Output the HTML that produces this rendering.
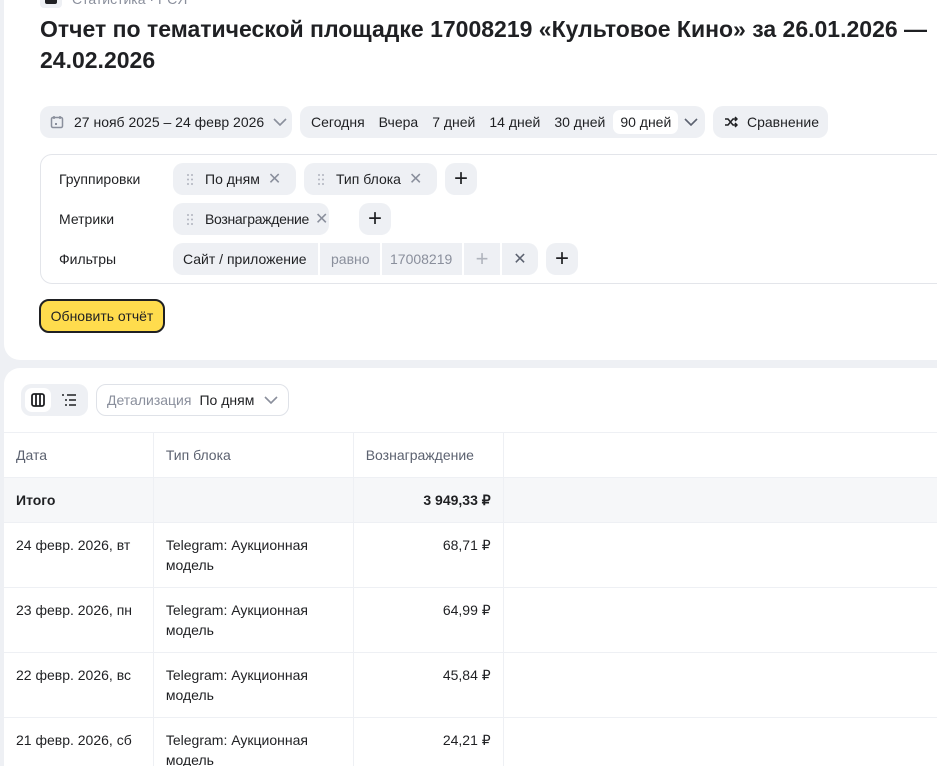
<!DOCTYPE html>
<html><head><meta charset="utf-8"><style>
*{box-sizing:border-box;margin:0;padding:0}
html,body{width:937px;height:766px;overflow:hidden}
body{background:#eef0f4;font-family:"Liberation Sans",sans-serif;color:#1f2023;position:relative;font-size:14px}
.p1{position:absolute;left:4px;top:0;width:960px;height:360px;background:#fff;border-radius:0 0 0 16px}
.p2{position:absolute;left:4px;top:368px;width:960px;height:420px;background:#fff;border-radius:16px 0 0 0;overflow:hidden}
.abs{position:absolute}
.pill{position:absolute;height:32px;background:#eef0f4;border-radius:10px;display:flex;align-items:center;font-size:14px;white-space:nowrap}
.g{color:#8a8f9c}
.x{color:#8a8f9c;font-size:16px}
table{border-collapse:collapse;position:absolute;left:-1px;top:64px;font-size:14px}
td{border:1px solid #eef0f4;vertical-align:top;padding:12px 12px;line-height:20px}
tr.h td{color:#5c6270;height:45px;vertical-align:middle}
tr.t td{background:#f6f7f9;font-weight:bold;height:45px;vertical-align:middle}
tr.r td{height:65px}
.num{text-align:right}
</style></head><body>
<div class="p1">
 <div class="abs" style="left:36px;top:-10px;width:22px;height:18px;background:#eef0f4;border-radius:4px"><div style="position:absolute;left:5px;top:4px;width:12px;height:10px;background:#1f2023;border-radius:2px"></div></div>
 <div class="abs g" style="left:68px;top:-9px;font-size:14px">Статистика · РСЯ</div>
 <div class="abs" style="left:36px;top:14px;font-size:23px;font-weight:bold;line-height:31px;width:900px">Отчет по тематической площадке 17008219 «Культовое Кино» за 26.01.2026 —<br>24.02.2026</div>
 <div class="pill" style="left:36px;top:106px;width:252px;padding-left:10px">
  <svg width="14" height="14" viewBox="0 0 14 14" fill="none" stroke="#8a8f9c" stroke-width="1.5"><rect x="1.5" y="2.5" width="11" height="10" rx="1.5"/><path d="M4 1v3M10 1v3"/><rect x="5" y="8" width="2" height="2" fill="#8a8f9c" stroke="none"/></svg>
  <span style="margin-left:10px">27 нояб 2025 – 24 февр 2026</span>
  <svg style="margin-left:9px" width="14" height="8" viewBox="0 0 14 8" fill="none" stroke="#8a8f9c" stroke-width="1.6"><path d="M1 1l6 6 6-6"/></svg>
 </div>
 <div class="pill" style="left:296px;top:106px;width:405px">
  <span style="margin-left:11px">Сегодня</span><span style="margin-left:14px">Вчера</span><span style="margin-left:14px">7 дней</span><span style="margin-left:14px">14 дней</span><span style="margin-left:14px">30 дней</span>
  <span style="margin-left:8px;background:#fff;border-radius:7px;padding:4px 7px">90 дней</span>
  <svg style="margin-left:6px" width="14" height="8" viewBox="0 0 14 8" fill="none" stroke="#5c6270" stroke-width="1.6"><path d="M1 1l6 6 6-6"/></svg>
 </div>
 <div class="pill" style="left:709px;top:106px;width:115px;padding-left:12px">
  <svg width="13" height="12" viewBox="0 0 13 12" fill="none" stroke="#1f2023" stroke-width="1.5"><path d="M0 3h3l5 6h4M0 9h3l5-6h4M10 1l2 2-2 2M10 7l2 2-2 2"/></svg>
  <span style="margin-left:9px">Сравнение</span>
 </div>
 <div class="abs" style="left:36px;top:154px;width:920px;height:130px;border:1px solid #e3e5ea;border-radius:12px"></div>
 <div class="abs" style="left:55px;top:171px">Группировки</div>
 <div class="abs" style="left:55px;top:211px">Метрики</div>
 <div class="abs" style="left:55px;top:251px">Фильтры</div>
 <div class="pill" style="left:169px;top:163px;width:123px;padding-left:14px"><svg width="6" height="11" viewBox="0 0 6 11" fill="#b0b4bd"><circle cx="1" cy="1" r="1"/><circle cx="5" cy="1" r="1"/><circle cx="1" cy="5.5" r="1"/><circle cx="5" cy="5.5" r="1"/><circle cx="1" cy="10" r="1"/><circle cx="5" cy="10" r="1"/></svg><span style="margin-left:12px">По дням</span><span class="x" style="margin-left:8px">✕</span></div>
 <div class="pill" style="left:300px;top:163px;width:133px;padding-left:14px"><svg width="6" height="11" viewBox="0 0 6 11" fill="#b0b4bd"><circle cx="1" cy="1" r="1"/><circle cx="5" cy="1" r="1"/><circle cx="1" cy="5.5" r="1"/><circle cx="5" cy="5.5" r="1"/><circle cx="1" cy="10" r="1"/><circle cx="5" cy="10" r="1"/></svg><span style="margin-left:12px">Тип блока</span><span class="x" style="margin-left:8px">✕</span></div>
 <div class="pill" style="left:441px;top:163px;width:32px;justify-content:center;font-size:24px">+</div>
 <div class="pill" style="left:169px;top:203px;width:156px;padding-left:14px"><svg width="6" height="11" viewBox="0 0 6 11" fill="#b0b4bd"><circle cx="1" cy="1" r="1"/><circle cx="5" cy="1" r="1"/><circle cx="1" cy="5.5" r="1"/><circle cx="5" cy="5.5" r="1"/><circle cx="1" cy="10" r="1"/><circle cx="5" cy="10" r="1"/></svg><span style="margin-left:12px;letter-spacing:-0.3px">Вознаграждение</span><span class="x" style="margin-left:6px">✕</span></div>
 <div class="pill" style="left:355px;top:203px;width:32px;justify-content:center;font-size:24px">+</div>
 <div class="pill" style="left:169px;top:243px;width:145px;border-radius:10px 0 0 10px;padding-left:10px">Сайт / приложение</div>
 <div class="pill g" style="left:316px;top:243px;width:60px;border-radius:0;padding-left:11px">равно</div>
 <div class="pill g" style="left:378px;top:243px;width:80px;border-radius:0;padding-left:8px">17008219</div>
 <div class="pill g" style="left:460px;top:243px;width:36px;border-radius:0;justify-content:center;font-size:22px;color:#b0b4bd">+</div>
 <div class="pill" style="left:498px;top:243px;width:36px;border-radius:0 10px 10px 0;justify-content:center;font-size:16px;color:#5c6270">✕</div>
 <div class="pill" style="left:542px;top:243px;width:32px;justify-content:center;font-size:24px">+</div>
 <div class="abs" style="left:35px;top:299px;width:126px;height:34px;background:#ffdc4d;border:2px solid #1f2023;border-radius:10px;display:flex;align-items:center;justify-content:center;font-size:14px">Обновить отчёт</div>
</div>
<div class="p2">
 <div class="abs" style="left:17px;top:16px;width:67px;height:32px;background:#eef0f4;border-radius:10px"></div>
 <div class="abs" style="left:21px;top:20px;width:26px;height:24px;background:#fff;border-radius:7px"></div>
 <svg class="abs" style="left:27px;top:25px" width="14" height="14" viewBox="0 0 14 14" fill="none" stroke="#1f2023" stroke-width="1.8"><rect x="1" y="1" width="12" height="12" rx="2"/><path d="M5 1v12M9 1v12"/></svg>
 <svg class="abs" style="left:57px;top:26px" width="16" height="12" viewBox="0 0 16 12" stroke="#1f2023" stroke-width="1.6"><path d="M1 1h2M6 1h9M4 6h2M8 6h7M4 11h2M8 11h7"/></svg>
 <div class="abs" style="left:92px;top:16px;width:193px;height:32px;border:1px solid #dfe2e8;border-radius:10px;display:flex;align-items:center;padding-left:10px"><span class="g">Детализация</span><span style="margin-left:8px">По дням</span><svg style="margin-left:10px" width="14" height="8" viewBox="0 0 14 8" fill="none" stroke="#8a8f9c" stroke-width="1.6"><path d="M1 1l6 6 6-6"/></svg></div>
 <table>
  <colgroup><col style="width:150px"><col style="width:200px"><col style="width:150px"><col style="width:460px"></colgroup>
  <tr class="h"><td>Дата</td><td>Тип блока</td><td>Вознаграждение</td><td></td></tr>
  <tr class="t"><td>Итого</td><td></td><td class="num">3 949,33 ₽</td><td></td></tr>
  <tr class="r"><td>24 февр. 2026, вт</td><td>Telegram: Аукционная модель</td><td class="num">68,71 ₽</td><td></td></tr>
  <tr class="r"><td>23 февр. 2026, пн</td><td>Telegram: Аукционная модель</td><td class="num">64,99 ₽</td><td></td></tr>
  <tr class="r"><td>22 февр. 2026, вс</td><td>Telegram: Аукционная модель</td><td class="num">45,84 ₽</td><td></td></tr>
  <tr class="r"><td>21 февр. 2026, сб</td><td>Telegram: Аукционная модель</td><td class="num">24,21 ₽</td><td></td></tr>
 </table>
</div>
</body></html>
